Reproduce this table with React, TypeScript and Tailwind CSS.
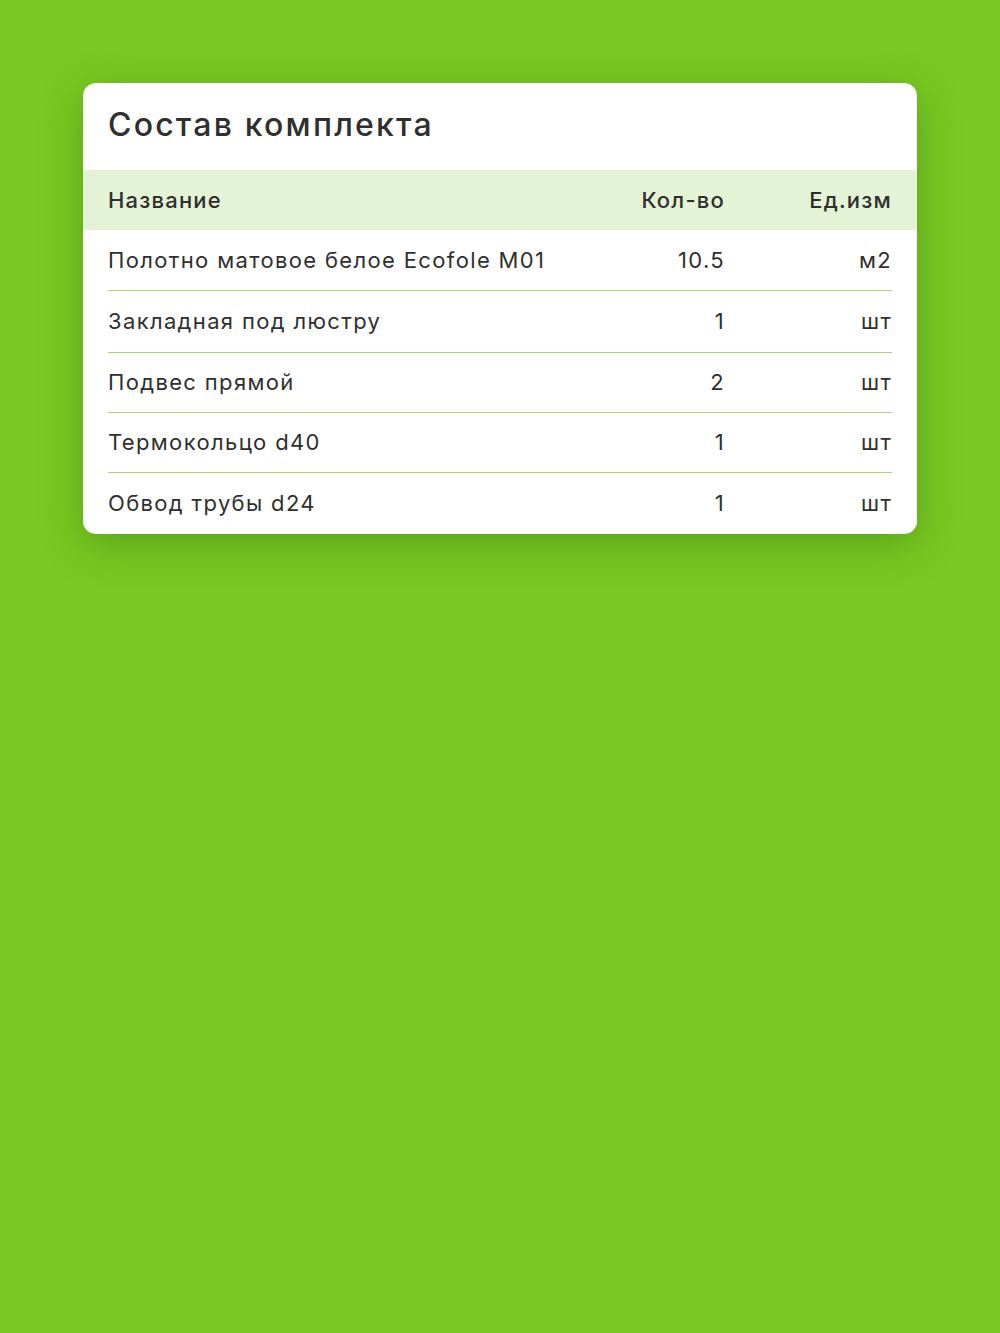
const items = [
  { name: "Полотно матовое белое Ecofole M01", qty: "10.5", unit: "м2", h: "h-[61px]" },
  { name: "Закладная под люстру", qty: "1", unit: "шт", h: "h-[62px]" },
  { name: "Подвес прямой", qty: "2", unit: "шт", h: "h-[60px]" },
  { name: "Термокольцо d40", qty: "1", unit: "шт", h: "h-[60px]" },
  { name: "Обвод трубы d24", qty: "1", unit: "шт", h: "h-[61px]" },
];

export default function App() {
  return (
    <div className="min-h-[1333px] bg-[#78c922] px-[83px] pt-[83px] font-['Inter',sans-serif] text-[#2f2f2f]">
      <div className="overflow-hidden rounded-[13px] bg-white shadow-[0_10px_40px_rgba(40,90,0,0.35)]">
        <h2 className="flex h-[87px] items-center px-[25px] pb-[4px] text-[32px] font-medium tracking-[2.2px]">
          Состав комплекта
        </h2>
        <div className="flex h-[60px] items-center bg-[#e4f2d6] px-[25px] text-[22px] font-medium tracking-[1.2px]">
          <div className="flex-1">Название</div>
          <div className="w-[140px] text-right">Кол-во</div>
          <div className="w-[167px] text-right">Ед.изм</div>
        </div>
        <div className="px-[25px]">
          {items.map((item, i) => (
            <div
              key={i}
              className={
                "flex items-center text-[22px] tracking-[1.35px] " +
                item.h +
                (i < items.length - 1 ? " border-b border-b-[#a3d975]" : "")
              }
            >
              <div className="flex-1">{item.name}</div>
              <div className="w-[140px] text-right">{item.qty}</div>
              <div className="w-[167px] text-right">{item.unit}</div>
            </div>
          ))}
        </div>
      </div>
    </div>
  );
}
